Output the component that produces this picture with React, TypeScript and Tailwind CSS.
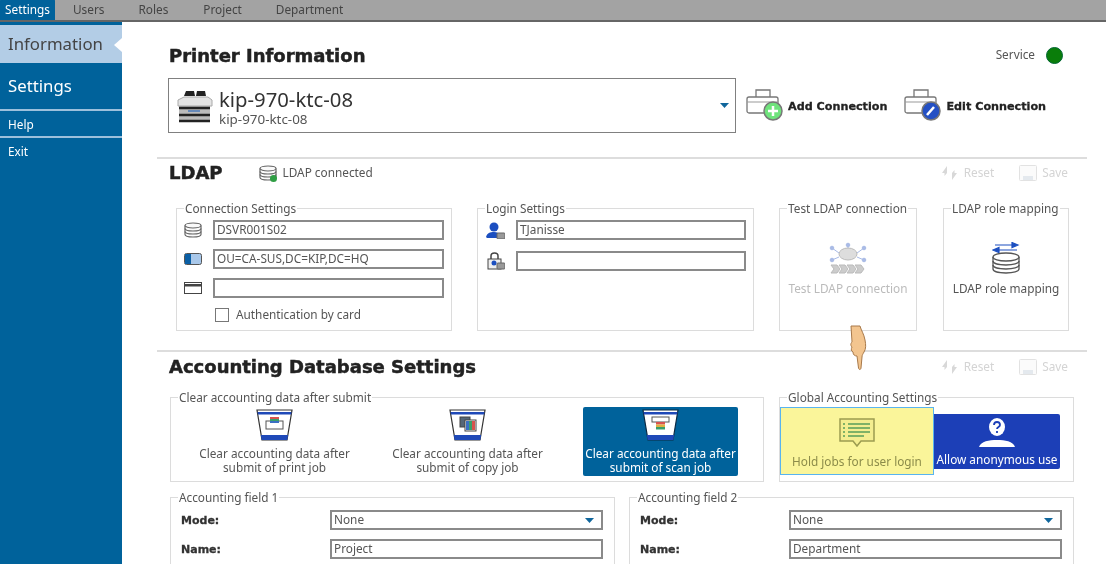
import type { ReactNode } from 'react';

const boxTitle = 'ml-[7px] px-[1px] text-[11.8px] leading-[14px] text-[#555]';
const heading = "font-['DejaVu_Sans'] text-[18px] font-bold text-[#222] [-webkit-text-stroke:0.5px_#222]";
const boldLabel = "font-['DejaVu_Sans'] text-[11.2px] font-bold text-[#222] [-webkit-text-stroke:0.3px_#222]";

function GroupBox({ title, className, children }: { title: string; className: string; children?: ReactNode }) {
  return (
    <fieldset className={`shrink-0 border border-[#dcdcdc] ${className}`}>
      <legend className={boxTitle}>{title}</legend>
      {children}
    </fieldset>
  );
}

function TextBox({ value, className = '' }: { value?: string; className?: string }) {
  return (
    <div className={`flex h-[20px] items-center border-2 border-[#8a8a8a] pl-[2px] text-[11.8px] text-[#555] ${className}`}>
      {value}
    </div>
  );
}

function Caret({ className = '' }: { className?: string }) {
  return (
    <svg width="9" height="5" viewBox="0 0 9 5" className={className}>
      <path d="M0 0h9L4.5 5z" fill="#10669c" />
    </svg>
  );
}

function ActionLink({ icon, label }: { icon: ReactNode; label: string }) {
  return (
    <div className="flex items-center gap-[5px] text-[11.8px] text-[#d4d4d4]">
      {icon}
      {label}
    </div>
  );
}

function ResetIcon() {
  return (
    <svg width="20" height="16" viewBox="0 0 20 16">
      <path d="M8 1 3 8h2.5v3L8 8V1zM13 15l5-7h-2.5V5L13 8v7z" fill="#d8d8d8" />
    </svg>
  );
}

function SaveIcon() {
  return (
    <svg width="18" height="16" viewBox="0 0 18 16">
      <rect x="0.5" y="0.5" width="17" height="15" rx="1" fill="#fbfbfb" stroke="#e2e2e2" />
      <rect x="4" y="11" width="10" height="4" fill="#e4e9ee" />
    </svg>
  );
}

function PrinterBase({ children }: { children: ReactNode }) {
  return (
    <svg width="39" height="33" viewBox="0 0 39 33">
      <path d="M10 8V1h14v7" fill="#fff" stroke="#777" strokeWidth="1.3" />
      <rect x="1" y="8" width="31" height="16" rx="2" fill="#fff" stroke="#777" strokeWidth="1.3" />
      <path d="M1 13h31" stroke="#999" />
      {children}
    </svg>
  );
}

function Bucket({ children, dark }: { children: ReactNode; dark?: boolean }) {
  return (
    <svg width="37" height="32" viewBox="0 0 37 32">
      <path d="M1 1h35l-5 30H6z" fill="#fff" stroke={dark ? '#0b2a44' : '#333'} strokeWidth="1.2" />
      <path d="M1.5 3h34l-.4 2.5H2z" fill="#1f49b8" />
      <path d="M4.8 26h27.4l-.9 5H5.7z" fill="#1f49b8" />
      {children}
    </svg>
  );
}

function DbIcon({ color = '#666', w = 18, h = 16 }: { color?: string; w?: number; h?: number }) {
  return (
    <svg width={w} height={h} viewBox="0 0 18 16" fill="#fafafa" stroke={color} strokeWidth="1.2">
      <path d="M1 3.5v9c0 1.4 3.6 2.5 8 2.5s8-1.1 8-2.5v-9" />
      <ellipse cx="9" cy="3.5" rx="8" ry="2.5" />
      <path d="M1 6.500c0 1.400 3.600 2.500 8 2.500s8-1.100 8-2.500M1 9.500c0 1.400 3.600 2.500 8 2.500s8-1.100 8-2.500" fill="none" />
    </svg>
  );
}

function HandCursor() {
  return (
    <svg width="20" height="46" viewBox="0 0 20 46" className="absolute left-[848px] top-[325px]">
      <path
        d="M3 1h9c1 4 4 8 5 14 1 5 1 9-1 12-1 2-2 3-2 5l-1 11c-.3 2-2 2-2.500 0L9 31c-2 0-4-1-4-4-2-1-2-3-1-5-2-2-1-4 0-5 0-5-1-11-1-16z"
        fill="#f3c58f"
        stroke="#a8794a"
        strokeWidth="1"
      />
    </svg>
  );
}

export default function App() {
  return (
    <div className="relative h-[564px] w-[1106px] overflow-hidden bg-white blur-[0.6px] font-['Noto_Sans','Open_Sans',sans-serif]">
      {/* top tabs */}
      <div className="flex h-[22px] items-end border-b-2 border-[#666] bg-[#a3a3a3] text-[11.8px] text-[#444]">
        <div className="flex h-[21px] w-[55px] items-center justify-center rounded-t-[2px] bg-[#00629b] text-white">Settings</div>
        <div className="ml-[18px] flex h-[21px] items-center">Users</div>
        <div className="ml-[34px] flex h-[21px] items-center">Roles</div>
        <div className="ml-[35px] flex h-[21px] items-center">Project</div>
        <div className="ml-[34px] flex h-[21px] items-center">Department</div>
      </div>

      <div className="flex h-[542px]">
        {/* sidebar */}
        <aside className="w-[122px] shrink-0 bg-[#00629b] pt-[3px] text-white">
          <div className="relative flex h-[38px] items-center bg-[#b3cde6] pl-[8px] text-[16.8px] text-[#444]">
            Information
            <div className="absolute right-0 top-[13px] h-0 w-0 border-y-[7px] border-r-[8px] border-y-transparent border-r-white" />
          </div>
          <div className="flex h-[48px] items-center border-b-2 border-[#9cc0dc] pl-[8px] text-[16.8px]">Settings</div>
          <div className="flex h-[27px] items-center border-b-2 border-[#9cc0dc] pl-[8px] pt-[2px] text-[11.8px]">Help</div>
          <div className="flex h-[27px] items-center pl-[8px] pt-[1px] text-[11.8px]">Exit</div>
        </aside>

        <main className="w-[984px] pl-[35px] text-[#555]">
          {/* printer information */}
          <section className="h-[135px] pt-[22px]">
            <div className="flex h-[22px] items-center pl-[12px] pr-[43px]">
              <h1 className={heading}>Printer Information</h1>
              <div className="ml-auto text-[11.8px]">Service</div>
              <div className="ml-[11px] h-[17px] w-[17px] rounded-full border border-[#063] bg-[#0a7d0a]" />
            </div>
            <div className="mt-[12px] flex items-center pl-[11px]">
              <div className="flex h-[55px] w-[568px] items-center border-[1.5px] border-[#808080] pl-[8px] pr-[6px]">
                <svg width="36" height="36" viewBox="0 0 36 36">
                  <path d="M7 8l2-5h8l1 5zM19 8l1-5h8l1 5z" fill="#222" />
                  <path d="M1 12l6-3h24l4 3v6H1z" fill="#e4e4e4" stroke="#aaa" />
                  <rect x="2" y="18" width="31" height="16" fill="#bbb" />
                  <path d="M2 20h31M2 27h31M2 33h31" stroke="#222" strokeWidth="2.5" />
                  <path d="M11 23h12" stroke="#4a78b8" strokeWidth="1.5" />
                </svg>
                <div className="ml-[6px] flex flex-col pt-[2px]">
                  <span className="text-[20.3px] leading-[24px] text-[#333]">kip-970-ktc-08</span>
                  <span className="text-[13.4px] leading-[16px]">kip-970-ktc-08</span>
                </div>
                <Caret className="ml-auto" />
              </div>
              <div className={`ml-[10px] flex items-center gap-[3px] ${boldLabel}`}>
                <PrinterBase>
                  <circle cx="27" cy="22" r="9" fill="#6fe37c" stroke="#777" strokeWidth="1.500" />
                  <path d="M27 17v10M22 22h10" stroke="#fff" strokeWidth="2.500" />
                </PrinterBase>
                <span className="pt-[3px]">Add Connection</span>
              </div>
              <div className={`ml-[17px] flex items-center gap-[3px] ${boldLabel}`}>
                <PrinterBase>
                  <circle cx="27" cy="22" r="9" fill="#2450c4" stroke="#777" strokeWidth="1.500" />
                  <path d="M23 26l7-8" stroke="#fff" strokeWidth="2.500" />
                </PrinterBase>
                <span className="pt-[3px]">Edit Connection</span>
              </div>
            </div>
          </section>

          {/* LDAP */}
          <section className="h-[193px] w-[930px] border-t-2 border-[#dddddd]">
            <div className="flex h-[26px] items-center pl-[12px] pr-[19px] pt-[1px]">
              <h2 className={heading}>LDAP</h2>
              <div className="ml-[36px] flex items-center gap-[6px] text-[11.8px]">
                <div className="relative">
                  <DbIcon />
                  <div className="absolute -bottom-[1px] right-0 h-[7px] w-[7px] rounded-full bg-[#2f9e44]" />
                </div>
                LDAP connected
              </div>
              <div className="ml-auto flex items-center gap-[25px]">
                <ActionLink icon={<ResetIcon />} label="Reset" />
                <ActionLink icon={<SaveIcon />} label="Save" />
              </div>
            </div>
            <div className="mt-[16px] flex pl-[19px]">
              <GroupBox title="Connection Settings" className="h-[130px] w-[276px]">
                <div className="mt-[5px] flex flex-col gap-[9px] pl-[7px] pr-[7px]">
                  <div className="flex items-center gap-[11px]">
                    <DbIcon />
                    <TextBox value="DSVR001S02" className="flex-1" />
                  </div>
                  <div className="flex items-center gap-[11px]">
                    <svg width="18" height="12" viewBox="0 0 18 12">
                      <rect x="0.5" y="0.5" width="17" height="11" rx="2" fill="#a9c8ea" stroke="#555" />
                      <rect x="1" y="1" width="6" height="10" fill="#0b5fa5" />
                    </svg>
                    <TextBox value="OU=CA-SUS,DC=KIP,DC=HQ" className="flex-1" />
                  </div>
                  <div className="flex items-center gap-[11px]">
                    <svg width="18" height="12" viewBox="0 0 18 12">
                      <rect x="0.5" y="0.5" width="17" height="11" fill="#fff" stroke="#444" />
                      <rect x="1" y="2" width="16" height="2.500" fill="#444" />
                    </svg>
                    <TextBox className="flex-1" />
                  </div>
                  <label className="-mt-[1px] ml-[31px] flex items-center gap-[7px] text-[11.8px]">
                    <span className="h-[14px] w-[14px] border border-[#777]" />
                    Authentication by card
                  </label>
                </div>
              </GroupBox>
              <GroupBox title="Login Settings" className="ml-[25px] h-[130px] w-[277px]">
                <div className="mt-[5px] flex flex-col gap-[11px] pl-[8px] pr-[7px]">
                  <div className="flex items-center gap-[11px]">
                    <svg width="19" height="17" viewBox="0 0 19 17">
                      <circle cx="8" cy="5" r="4.500" fill="#1c4fc0" />
                      <path d="M0 15c1-4 4-5 8-5 3 0 5 1 6 3v3H1z" fill="#1c4fc0" />
                      <rect x="11" y="11" width="8" height="6" rx="1" fill="#999" stroke="#666" />
                    </svg>
                    <TextBox value="TJanisse" className="flex-1" />
                  </div>
                  <div className="flex items-center gap-[11px]">
                    <svg width="19" height="18" viewBox="0 0 19 18">
                      <path d="M5 7V4c0-4 7-4 7 0v3" fill="none" stroke="#444" strokeWidth="1.500" />
                      <rect x="2" y="7" width="13" height="10" fill="#eee" stroke="#444" />
                      <circle cx="8" cy="11" r="2.500" fill="#1c4fc0" />
                      <rect x="11" y="11" width="8" height="6" rx="1" fill="#999" stroke="#666" />
                    </svg>
                    <TextBox className="flex-1" />
                  </div>
                </div>
              </GroupBox>
              <GroupBox title="Test LDAP connection" className="ml-[25px] h-[130px] w-[138px]">
                <div className="mt-[27px] flex flex-col items-center text-[11.8px] text-[#bbb]">
                  <svg width="38" height="32" viewBox="0 0 38 32" stroke="#a9bbe6" fill="#a9bbe6">
                    <path d="M19 8V3M10 11 3 6M28 11l7-5M10 15l-7 3M28 15l7 3" fill="none" />
                    <circle cx="3" cy="6" r="1.800" />
                    <circle cx="19" cy="3" r="1.800" />
                    <circle cx="35" cy="6" r="1.800" />
                    <circle cx="3" cy="18" r="1.800" />
                    <circle cx="35" cy="18" r="1.800" />
                    <ellipse cx="19" cy="12" rx="9" ry="6" fill="#ddd" stroke="#bbb" />
                    <path d="M2 23h6l3 4-3 4H2l3-4zM10 23h6l3 4-3 4h-6l3-4zM18 23h6l3 4-3 4h-6l3-4zM26 23h6l3 4-3 4h-6l3-4z" fill="#ccc" stroke="#bbb" />
                  </svg>
                  <span className="mt-[6px]">Test LDAP connection</span>
                </div>
              </GroupBox>
              <GroupBox title="LDAP role mapping" className="ml-[26px] h-[130px] w-[126px]">
                <div className="mt-[27px] flex flex-col items-center text-[11.8px]">
                  <svg width="28" height="32" viewBox="0 0 28 32">
                    <path d="M3 3h18M26 3l-6-2.500v5zM25 8H7M1 8l6-2.500v5z" fill="#1c4fc0" stroke="#1c4fc0" strokeWidth="1.200" />
                    <g fill="#fff" stroke="#555" strokeWidth="1.300">
                      <path d="M1 15v12c0 2.500 5.800 4 13 4s13-1.500 13-4V15" />
                      <ellipse cx="14" cy="15" rx="13" ry="4" />
                      <path d="M1 19c0 2.500 5.800 4 13 4s13-1.500 13-4M1 23c0 2.500 5.800 4 13 4s13-1.500 13-4" fill="none" />
                    </g>
                  </svg>
                  <span className="mt-[6px]">LDAP role mapping</span>
                </div>
              </GroupBox>
            </div>
          </section>

          {/* accounting */}
          <section className="w-[930px] border-t-2 border-[#dddddd]">
            <div className="flex h-[27px] items-center pl-[12px] pr-[19px] pt-[2px]">
              <h2 className={heading}>Accounting Database Settings</h2>
              <div className="ml-auto flex items-center gap-[25px]">
                <ActionLink icon={<ResetIcon />} label="Reset" />
                <ActionLink icon={<SaveIcon />} label="Save" />
              </div>
            </div>
            <div className="mt-[11px] flex pl-[13px]">
              <GroupBox title="Clear accounting data after submit" className="h-[92px] w-[594px]">
                <div className="flex gap-[38px] pl-[26px] pt-[3px] text-center text-[11.8px] leading-[14px]">
                  <div className="flex h-[69px] w-[155px] flex-col items-center justify-end pb-[2px]">
                    <Bucket>
                      <rect x="10" y="12" width="17" height="8" fill="#fff" stroke="#555" />
                      <rect x="14" y="8" width="9" height="2" fill="#d9534f" />
                      <rect x="14" y="10" width="9" height="2" fill="#3aa06a" />
                      <rect x="14" y="12" width="9" height="2" fill="#3b6fc4" />
                    </Bucket>
                    <span className="mt-[5px]">Clear accounting data after submit of print job</span>
                  </div>
                  <div className="flex h-[69px] w-[155px] flex-col items-center justify-end pb-[2px]">
                    <Bucket>
                      <rect x="11" y="8" width="10" height="10" fill="#567" stroke="#444" />
                      <rect x="16" y="11" width="11" height="11" fill="#fff" stroke="#444" />
                      <rect x="17" y="12" width="3" height="9" fill="#3b6fc4" />
                      <rect x="20" y="12" width="3" height="9" fill="#3aa06a" />
                      <rect x="23" y="12" width="3" height="9" fill="#d9534f" />
                    </Bucket>
                    <span className="mt-[5px]">Clear accounting data after submit of copy job</span>
                  </div>
                  <div className="flex h-[69px] w-[155px] flex-col items-center justify-end rounded-[2px] bg-[#00629b] pb-[2px] text-white">
                    <Bucket dark>
                      <rect x="10" y="8" width="17" height="5" fill="#fff" stroke="#555" />
                      <rect x="14" y="13" width="9" height="2.500" fill="#d9534f" />
                      <rect x="14" y="15.500" width="9" height="2.500" fill="#e0b040" />
                      <rect x="14" y="18" width="9" height="2.500" fill="#3aa06a" />
                    </Bucket>
                    <span className="mt-[5px]">Clear accounting data after submit of scan job</span>
                  </div>
                </div>
              </GroupBox>
              <GroupBox title="Global Accounting Settings" className="ml-[15px] h-[92px] w-[295px]">
                <div className="flex h-[71px] items-center pt-[3px] text-center text-[11.8px]">
                  <div className="flex h-[68px] w-[154px] flex-col items-center justify-center border border-[#58b4f0] bg-[#faf59a] pt-[7px] text-[#8c8c4a]">
                    <svg width="38" height="30" viewBox="0 0 38 30">
                      <path d="M2 1h34v22H23l-4 5-4-5H2z" fill="#f4ee90" stroke="#9c9c50" strokeWidth="1.500" />
                      <path d="M10 6h22M10 10h22M10 14h22M10 18h16" stroke="#5a9e5a" strokeWidth="1.500" />
                      <path d="M5 6h2M5 10h2M5 14h2M5 18h2" stroke="#5a9e5a" strokeWidth="1.500" />
                    </svg>
                    <span className="mt-[5px]">Hold jobs for user login</span>
                  </div>
                  <div className="flex h-[55px] w-[126px] flex-col items-center justify-center rounded-r-[2px] bg-[#1c3fb7] pt-[4px] text-white">
                    <svg width="38" height="30" viewBox="0 0 38 30">
                      <ellipse cx="19" cy="9" rx="8" ry="9" fill="#fff" />
                      <path d="M16 7c0-4 6-4 6 0 0 2-3 2-3 4M19 13v2" fill="none" stroke="#1c3fb7" strokeWidth="1.800" />
                      <path d="M1 29c2-6 10-7 18-7s16 1 18 7z" fill="#fff" />
                    </svg>
                    <span className="mt-[3px] whitespace-nowrap">Allow anonymous use</span>
                  </div>
                </div>
              </GroupBox>
            </div>
            <div className="mt-[8px] flex gap-[14px] pl-[13px]">
              {[
                { title: 'Accounting field 1', name: 'Project' },
                { title: 'Accounting field 2', name: 'Department' },
              ].map((field) => (
                <GroupBox key={field.title} title={field.title} className="h-[90px] w-[445px] border-b-0">
                  <div className="mt-[6px] flex flex-col gap-[9px] pl-[10px] pr-[11px] font-['DejaVu_Sans'] text-[11px] font-bold text-[#333] [-webkit-text-stroke:0.3px_#333]">
                    <div className="flex items-center">
                      <span className="w-[149px] pt-[2px]">Mode:</span>
                      <div className="flex h-[20px] flex-1 items-center justify-between border-2 border-[#8a8a8a] pl-[2px] pr-[7px] font-['Noto_Sans'] text-[11.8px] font-normal text-[#555] [-webkit-text-stroke:0]">
                        None
                        <Caret />
                      </div>
                    </div>
                    <div className="flex items-center">
                      <span className="w-[149px] pt-[2px]">Name:</span>
                      <TextBox value={field.name} className="flex-1 font-['Noto_Sans'] font-normal [-webkit-text-stroke:0]" />
                    </div>
                  </div>
                </GroupBox>
              ))}
            </div>
          </section>
        </main>
      </div>

      <HandCursor />
    </div>
  );
}
